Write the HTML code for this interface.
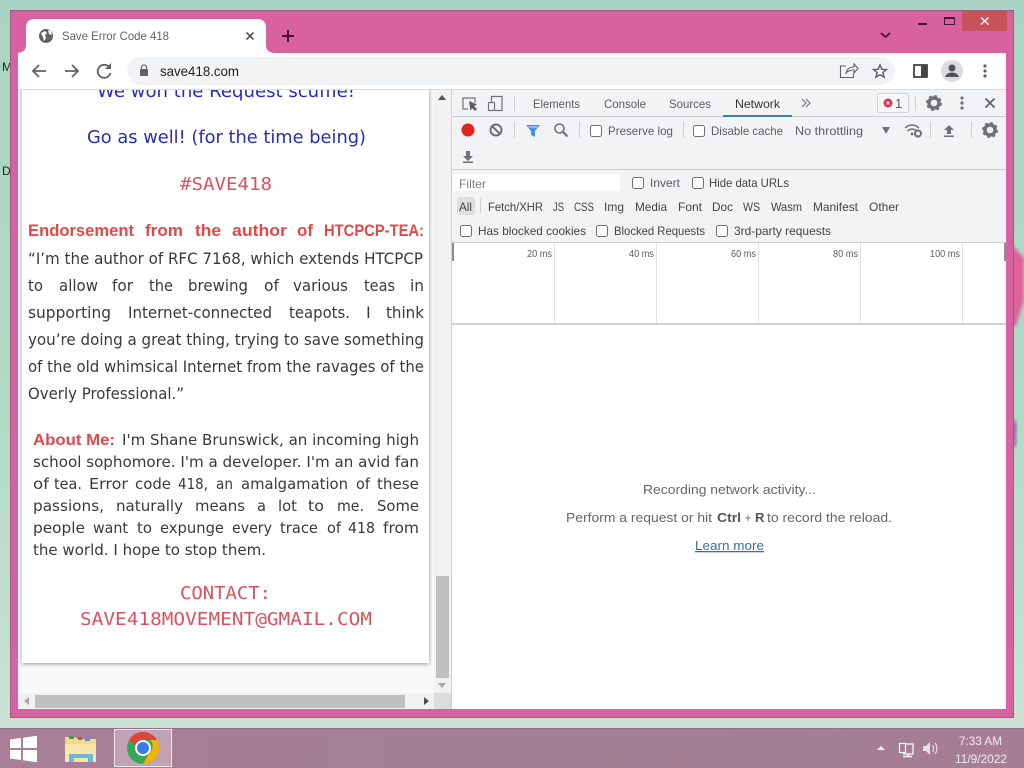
<!DOCTYPE html>
<html><head><meta charset="utf-8"><title>Save Error Code 418</title>
<style>
html,body{margin:0;padding:0;width:1024px;height:768px;overflow:hidden;background:#aad5c3}
svg{display:block;position:absolute;left:0;top:0}
text{font-family:"Liberation Sans",sans-serif;white-space:pre}
.d{font-size:12px;fill:#5a5d61}
.b{font-size:16px;fill:#3a3a3a}
.a{font-size:15.500px;fill:#3a3a3a}
.dj text,text.dj{font-family:"DejaVu Sans",sans-serif}
.m{font-family:"DejaVu Sans Mono",monospace;font-size:18px;fill:#d9525f}
.cb{fill:#fff;stroke:#6e7175;stroke-width:1}
</style></head><body>
<svg width="1024" height="768" viewBox="0 0 1024 768" xmlns="http://www.w3.org/2000/svg">
<defs>
<linearGradient id="wp" x1="0" y1="0" x2="0" y2="1"><stop offset="0" stop-color="#a9d3c4"/><stop offset="0.5" stop-color="#aedac4"/><stop offset="1" stop-color="#c9e2d4"/></linearGradient>
<linearGradient id="tb" x1="0" y1="0" x2="1" y2="0"><stop offset="0" stop-color="#a97e98"/><stop offset="0.5" stop-color="#a38096"/><stop offset="1" stop-color="#a67e93"/></linearGradient>
<filter id="sh" x="-5%" y="-5%" width="110%" height="110%"><feDropShadow dx="0" dy="1" stdDeviation="2" flood-color="#000" flood-opacity=".4"/></filter>
<filter id="bl"><feGaussianBlur stdDeviation="1.500"/></filter>
<clipPath id="pg"><rect x="18" y="90" width="416" height="605"/></clipPath>
</defs>
<!-- wallpaper -->
<rect width="1024" height="728" fill="url(#wp)"/>
<path d="M1012 245 L1024 258 V300 L1016 326 H1012Z" fill="#e0609a" filter="url(#bl)"/>
<path d="M1012 415 L1017 425 L1016 447 H1012Z" fill="#9a6fa8" filter="url(#bl)"/>
<text x="2" y="71" font-size="12" fill="#222">M</text>
<text x="2" y="175" font-size="12" fill="#222">D</text>
<!-- window -->
<rect x="10.500" y="10.500" width="1003" height="707" fill="#d8619f" stroke="#94607c"/>
<rect x="962" y="11" width="45" height="20" fill="#c9535a"/>
<path d="M981 17.500l7.500 7M988.500 17.500l-7.500 7" stroke="#fff" stroke-width="1.300"/>
<rect x="918" y="23" width="9" height="2" fill="#4a0f3a"/>
<rect x="944.500" y="17.500" width="10" height="7" fill="none" stroke="#4a0f3a" stroke-width="1"/><rect x="944" y="17" width="11" height="2" fill="#4a0f3a"/>
<path d="M881 33l4.500 4 4.500-4" fill="none" stroke="#4a0f3a" stroke-width="1.800"/>
<!-- tab -->
<path d="M18 53 C24 52 26 50 26 44 V28 Q26 19 35 19 H257 Q266 19 266 28 V44 C266 50 268 52 274 53Z" fill="#fff"/>
<circle cx="46" cy="36" r="7" fill="#5f6368"/>
<path d="M41 33l4 -2 2 2-2 2 1 3 -2 3-1-4zM48 30l3 1 1 4-3-1z" fill="#fff"/>
<text x="62" y="40" font-size="12" fill="#5f6368" textLength="107" lengthAdjust="spacingAndGlyphs">Save Error Code 418</text>
<path d="M246.500 32.500l7 7M253.500 32.500l-7 7" stroke="#444" stroke-width="1.500"/>
<path d="M288 30v12M282 36h12" stroke="#4a0f3a" stroke-width="2"/>
<!-- toolbar -->
<rect x="18" y="53" width="988" height="37" fill="#fff"/>
<rect x="18" y="89" width="988" height="1" fill="#dadce0"/>
<rect x="127" y="57" width="768" height="28" rx="14" fill="#f1f3f4"/>
<path d="M46 71H34M39 65l-6 6 6 6" fill="none" stroke="#5f6368" stroke-width="1.800"/>
<path d="M65 71H78M72 65l6 6-6 6" fill="none" stroke="#5f6368" stroke-width="1.800"/>
<path d="M109.500 67.500A6.500 6.500 0 1 0 110.500 73" fill="none" stroke="#5f6368" stroke-width="1.800"/>
<path d="M111 63v6h-6z" fill="#5f6368"/>
<rect x="140" y="69" width="8" height="7" rx="1" fill="#5f6368"/>
<path d="M141.500 69v-1.500a2.500 2.500 0 0 1 5 0V69" fill="none" stroke="#5f6368" stroke-width="1.200"/>
<text x="160" y="76" font-size="13.500" fill="#222" textLength="79" lengthAdjust="spacingAndGlyphs">save418.com</text>
<path d="M846 66h-5.500v11.500h13V73M846 73c1-4 4-6 8-6v-3l4 4.500-4 4.500v-3c-3 0-6 1-8 3z" fill="none" stroke="#5f6368" stroke-width="1.100"/>
<path d="M880 65l1.800 4.200 4.600.4-3.500 3 1.100 4.500-4-2.400-4 2.400 1.100-4.500-3.500-3 4.600-.4z" fill="none" stroke="#5f6368" stroke-width="1.500"/>
<rect x="914" y="65" width="13" height="12" fill="none" stroke="#444" stroke-width="1.800"/><rect x="921" y="65" width="6" height="12" fill="#444"/>
<circle cx="952" cy="71" r="11" fill="#dadce0"/>
<circle cx="952" cy="68" r="3.500" fill="#4f5358"/><path d="M945 77c1-3 4-4.500 7-4.500s6 1.500 7 4.500z" fill="#4f5358"/>
<circle cx="985" cy="66" r="1.600" fill="#5f6368"/><circle cx="985" cy="71" r="1.600" fill="#5f6368"/><circle cx="985" cy="76" r="1.600" fill="#5f6368"/>
<!-- page -->
<rect x="18" y="90" width="434" height="619" fill="#f9f9f9"/>
<rect x="22" y="85" width="407" height="578" fill="#fff" filter="url(#sh)" clip-path="url(#pg)"/>
<g clip-path="url(#pg)">
<text class="dj" x="97" y="97" font-size="18" fill="#2b2bb5" textLength="258" lengthAdjust="spacingAndGlyphs">We won the Request scuffle!</text>
</g>
<text class="dj" x="87" y="143" font-size="18" fill="#2b2bb5" textLength="279" lengthAdjust="spacingAndGlyphs">Go as well! (for the time being)</text>
<text class="m" x="180" y="190" textLength="92" lengthAdjust="spacingAndGlyphs">#SAVE418</text>
<g style="fill:#e2474a;font-weight:bold;font-size:16.500px">
<text x="28" y="236" textLength="106" lengthAdjust="spacingAndGlyphs">Endorsement</text>
<text x="145" y="236" textLength="38" lengthAdjust="spacingAndGlyphs">from</text>
<text x="195" y="236" textLength="26" lengthAdjust="spacingAndGlyphs">the</text>
<text x="232" y="236" textLength="55" lengthAdjust="spacingAndGlyphs">author</text>
<text x="297" y="236" textLength="16" lengthAdjust="spacingAndGlyphs">of</text>
<text x="324" y="236" textLength="100" lengthAdjust="spacingAndGlyphs">HTCPCP-TEA:</text>
</g>
<g class="b dj">
<text x="28" y="264" textLength="395" lengthAdjust="spacingAndGlyphs">“I’m the author of RFC 7168, which extends HTCPCP</text>
<text x="28" y="291" textLength="15" lengthAdjust="spacingAndGlyphs">to</text>
<text x="59" y="291" textLength="39" lengthAdjust="spacingAndGlyphs">allow</text>
<text x="112" y="291" textLength="21" lengthAdjust="spacingAndGlyphs">for</text>
<text x="149" y="291" textLength="24" lengthAdjust="spacingAndGlyphs">the</text>
<text x="188" y="291" textLength="60" lengthAdjust="spacingAndGlyphs">brewing</text>
<text x="264" y="291" textLength="15" lengthAdjust="spacingAndGlyphs">of</text>
<text x="293" y="291" textLength="55" lengthAdjust="spacingAndGlyphs">various</text>
<text x="364" y="291" textLength="31" lengthAdjust="spacingAndGlyphs">teas</text>
<text x="410" y="291" textLength="14" lengthAdjust="spacingAndGlyphs">in</text>
<text x="28" y="318" textLength="83" lengthAdjust="spacingAndGlyphs">supporting</text>
<text x="128" y="318" textLength="144" lengthAdjust="spacingAndGlyphs">Internet-connected</text>
<text x="289" y="318" textLength="61" lengthAdjust="spacingAndGlyphs">teapots.</text>
<text x="366" y="318">I</text>
<text x="386" y="318" textLength="38" lengthAdjust="spacingAndGlyphs">think</text>
<text x="28" y="345" textLength="396" lengthAdjust="spacingAndGlyphs">you’re doing a great thing, trying to save something</text>
<text x="28" y="372" textLength="396" lengthAdjust="spacingAndGlyphs">of the old whimsical Internet from the ravages of the</text>
<text x="28" y="399" textLength="156" lengthAdjust="spacingAndGlyphs">Overly Professional.”</text>
</g>
<text x="33" y="445" font-size="16" font-weight="bold" fill="#e2474a" textLength="82" lengthAdjust="spacingAndGlyphs">About Me:</text>
<g class="a dj">
<text x="122" y="445" textLength="297" lengthAdjust="spacingAndGlyphs">I'm Shane Brunswick, an incoming high</text>
<text x="33" y="467" textLength="386" lengthAdjust="spacingAndGlyphs">school sophomore. I'm a developer. I'm an avid fan</text>
<text x="33" y="489" textLength="16" lengthAdjust="spacingAndGlyphs">of</text>
<text x="54" y="489" textLength="28" lengthAdjust="spacingAndGlyphs">tea.</text>
<text x="89" y="489" textLength="39" lengthAdjust="spacingAndGlyphs">Error</text>
<text x="135" y="489" textLength="36" lengthAdjust="spacingAndGlyphs">code</text>
<text x="178" y="489" textLength="30" lengthAdjust="spacingAndGlyphs">418,</text>
<text x="216" y="489" textLength="17" lengthAdjust="spacingAndGlyphs">an</text>
<text x="241" y="489" textLength="107" lengthAdjust="spacingAndGlyphs">amalgamation</text>
<text x="356" y="489" textLength="14" lengthAdjust="spacingAndGlyphs">of</text>
<text x="377" y="489" textLength="42" lengthAdjust="spacingAndGlyphs">these</text>
<text x="33" y="511" textLength="71" lengthAdjust="spacingAndGlyphs">passions,</text>
<text x="116" y="511" textLength="67" lengthAdjust="spacingAndGlyphs">naturally</text>
<text x="195" y="511" textLength="50" lengthAdjust="spacingAndGlyphs">means</text>
<text x="257" y="511" textLength="9" lengthAdjust="spacingAndGlyphs">a</text>
<text x="278" y="511" textLength="19" lengthAdjust="spacingAndGlyphs">lot</text>
<text x="308" y="511" textLength="16" lengthAdjust="spacingAndGlyphs">to</text>
<text x="337" y="511" textLength="27" lengthAdjust="spacingAndGlyphs">me.</text>
<text x="377" y="511" textLength="42" lengthAdjust="spacingAndGlyphs">Some</text>
<text x="33" y="533" textLength="52" lengthAdjust="spacingAndGlyphs">people</text>
<text x="93" y="533" textLength="35" lengthAdjust="spacingAndGlyphs">want</text>
<text x="137" y="533" textLength="15" lengthAdjust="spacingAndGlyphs">to</text>
<text x="160" y="533" textLength="64" lengthAdjust="spacingAndGlyphs">expunge</text>
<text x="232" y="533" textLength="40" lengthAdjust="spacingAndGlyphs">every</text>
<text x="280" y="533" textLength="38" lengthAdjust="spacingAndGlyphs">trace</text>
<text x="327" y="533" textLength="14" lengthAdjust="spacingAndGlyphs">of</text>
<text x="348" y="533" textLength="27" lengthAdjust="spacingAndGlyphs">418</text>
<text x="383" y="533" textLength="36" lengthAdjust="spacingAndGlyphs">from</text>
<text x="33" y="555" textLength="233" lengthAdjust="spacingAndGlyphs">the world. I hope to stop them.</text>
</g>
<text class="m" x="180" y="599" textLength="91" lengthAdjust="spacingAndGlyphs">CONTACT:</text>
<text class="m" x="80" y="625" textLength="292" lengthAdjust="spacingAndGlyphs">SAVE418MOVEMENT@GMAIL.COM</text>
<!-- scrollbars -->
<rect x="434" y="90" width="17" height="619" fill="#f1f1f1"/>
<rect x="451" y="90" width="1" height="619" fill="#cfd1d3"/>
<rect x="436" y="576" width="13" height="102" fill="#c0c0c0"/>
<path d="M442 95l4 5h-8z" fill="#505050"/>
<path d="M442 688l-4-5h8z" fill="#a8a8a8"/>
<rect x="18" y="693" width="416" height="15" fill="#f1f1f1"/>
<rect x="434" y="693" width="17" height="16" fill="#dcdcdc"/>
<rect x="35" y="695" width="370" height="13" fill="#c0c0c0"/>
<path d="M24 701l5-4v8z" fill="#a8a8a8"/>
<path d="M429 701l-5-4v8z" fill="#505050"/>
<!-- devtools -->
<rect x="452" y="90" width="554" height="153" fill="#f1f3f4"/>
<rect x="452" y="116" width="554" height="1" fill="#cbcdd1"/>
<rect x="452" y="169" width="554" height="1" fill="#cbcdd1"/>
<rect x="452" y="242" width="554" height="1" fill="#cbcdd1"/>
<rect x="452" y="243" width="554" height="466" fill="#fff"/>
<!-- devtools top icons -->
<path d="M468 109h-5V98h12v5" fill="none" stroke="#6e7175" stroke-width="1.200"/>
<path d="M469 101l8 3.500-3 1.500 3 3-2 2-3-3-1.500 3z" fill="#5a5d61"/>
<rect x="488.500" y="102.500" width="6" height="8" rx="1" fill="none" stroke="#6e7175" stroke-width="1.200"/>
<path d="M491.500 102V96.500H502V110.500H495" fill="none" stroke="#6e7175" stroke-width="1.200"/>
<rect x="514" y="96" width="1" height="15" fill="#cbcdd1"/>
<g class="d">
<text x="533" y="108" textLength="47" lengthAdjust="spacingAndGlyphs">Elements</text>
<text x="604" y="108" textLength="42" lengthAdjust="spacingAndGlyphs">Console</text>
<text x="669" y="108" textLength="42" lengthAdjust="spacingAndGlyphs">Sources</text>
<text x="735" y="108" textLength="45" lengthAdjust="spacingAndGlyphs" style="fill:#333">Network</text>
</g>
<rect x="723" y="115" width="69" height="2" fill="#3f7cb0"/>
<path d="M802 99l4 4-4 4M806 99l4 4-4 4" fill="none" stroke="#6e7175" stroke-width="1.100"/>
<rect x="877.500" y="93.500" width="31" height="19" rx="2" fill="#f5f6f7" stroke="#d0d2d5"/>
<circle cx="888" cy="103" r="4.500" fill="#d93352"/>
<path d="M886.500 101.500l3 3M889.500 101.500l-3 3" stroke="#fff" stroke-width=".9"/>
<text x="895" y="108" font-size="13" fill="#5a5d61">1</text>
<rect x="915" y="96" width="1" height="15" fill="#cbcdd1"/>
<circle cx="934" cy="103" r="5" fill="none" stroke="#6e7175" stroke-width="3.400"/><circle cx="934" cy="103" r="7" fill="none" stroke="#6e7175" stroke-width="2" stroke-dasharray="2.800 2.700"/>
<circle cx="962" cy="98" r="1.600" fill="#6e7175"/><circle cx="962" cy="103" r="1.600" fill="#6e7175"/><circle cx="962" cy="108" r="1.600" fill="#6e7175"/>
<path d="M985.500 98.500l9 9M994.500 98.500l-9 9" stroke="#5f6368" stroke-width="1.800"/>
<!-- row 2 -->
<circle cx="468" cy="130" r="6.500" fill="#e0261c"/>
<circle cx="496" cy="130" r="5.500" fill="none" stroke="#6e7175" stroke-width="2"/>
<path d="M492 126l8 8" stroke="#6e7175" stroke-width="2"/>
<rect x="514" y="122" width="1" height="16" fill="#cbcdd1"/>
<path d="M526 125h14l-5 6v6l-4-2v-4z" fill="#4a8fe0"/><path d="M528.500 127h9" stroke="#cfe2f8" stroke-width="1"/>
<circle cx="559.500" cy="128.500" r="4.500" fill="none" stroke="#6e7175" stroke-width="1.600"/>
<path d="M563 132l4.500 4.500" stroke="#6e7175" stroke-width="2"/>
<rect x="579" y="122" width="1" height="16" fill="#cbcdd1"/>
<rect class="cb" x="590.500" y="125.500" width="11" height="11" rx="2"/>
<text class="d" x="608" y="135" textLength="65" lengthAdjust="spacingAndGlyphs">Preserve log</text>
<rect x="683" y="122" width="1" height="16" fill="#cbcdd1"/>
<rect class="cb" x="693.500" y="125.500" width="11" height="11" rx="2"/>
<text class="d" x="711" y="135" textLength="72" lengthAdjust="spacingAndGlyphs">Disable cache</text>
<text class="d" x="795" y="135" textLength="68" lengthAdjust="spacingAndGlyphs">No throttling</text>
<path d="M882 127h8l-4 7z" fill="#6e7175"/>
<path d="M905 128c4-4 10-4 14 0M907.500 131c2.500-2.500 6.500-2.500 9 0" fill="none" stroke="#6e7175" stroke-width="1.500"/>
<circle cx="912" cy="134" r="1.400" fill="#6e7175"/>
<circle cx="918" cy="133.500" r="3" fill="none" stroke="#6e7175" stroke-width="2"/>
<rect x="930" y="122" width="1" height="16" fill="#cbcdd1"/>
<path d="M949 125l5 5h-3v4h-4v-4h-3z" fill="#6e7175"/><rect x="944" y="135.500" width="10" height="1.500" fill="#6e7175"/>
<rect x="971" y="122" width="1" height="16" fill="#cbcdd1"/>
<circle cx="990" cy="130" r="5" fill="none" stroke="#6e7175" stroke-width="3.400"/><circle cx="990" cy="130" r="7" fill="none" stroke="#6e7175" stroke-width="2" stroke-dasharray="2.800 2.700"/>
<path d="M468 161l-5-5h3v-5h4v5h3z" fill="#6e7175"/><rect x="463" y="161.500" width="10" height="1.500" fill="#6e7175"/>
<!-- filter row -->
<rect x="453" y="174" width="167" height="17" fill="#fff"/>
<text x="459" y="188" font-size="12" fill="#7b7e82" textLength="27" lengthAdjust="spacingAndGlyphs">Filter</text>
<rect class="cb" x="632.500" y="177.500" width="11" height="11" rx="2"/>
<text class="d" x="650" y="187" textLength="30" lengthAdjust="spacingAndGlyphs">Invert</text>
<rect class="cb" x="692.500" y="177.500" width="11" height="11" rx="2"/>
<text class="d" x="709" y="187" textLength="80" lengthAdjust="spacingAndGlyphs" style="fill:#444">Hide data URLs</text>
<rect x="457" y="197" width="18" height="18" rx="4" fill="#dcdee0"/>
<rect x="480" y="199" width="1" height="14" fill="#cbcdd1"/>
<g class="d" style="fill:#444">
<text x="459" y="211" textLength="13" lengthAdjust="spacingAndGlyphs">All</text>
<text x="488" y="211" textLength="55" lengthAdjust="spacingAndGlyphs">Fetch/XHR</text>
<text x="553" y="211" textLength="11" lengthAdjust="spacingAndGlyphs">JS</text>
<text x="574" y="211" textLength="20" lengthAdjust="spacingAndGlyphs">CSS</text>
<text x="604" y="211" textLength="20" lengthAdjust="spacingAndGlyphs">Img</text>
<text x="635" y="211" textLength="32" lengthAdjust="spacingAndGlyphs">Media</text>
<text x="678" y="211" textLength="24" lengthAdjust="spacingAndGlyphs">Font</text>
<text x="712" y="211" textLength="21" lengthAdjust="spacingAndGlyphs">Doc</text>
<text x="743" y="211" textLength="17" lengthAdjust="spacingAndGlyphs">WS</text>
<text x="771" y="211" textLength="31" lengthAdjust="spacingAndGlyphs">Wasm</text>
<text x="813" y="211" textLength="45" lengthAdjust="spacingAndGlyphs">Manifest</text>
<text x="869" y="211" textLength="30" lengthAdjust="spacingAndGlyphs">Other</text>
</g>
<rect class="cb" x="460.500" y="225.500" width="11" height="11" rx="2"/>
<rect class="cb" x="596.500" y="225.500" width="11" height="11" rx="2"/>
<rect class="cb" x="716.500" y="225.500" width="11" height="11" rx="2"/>
<g class="d" style="fill:#444">
<text x="478" y="235" textLength="108" lengthAdjust="spacingAndGlyphs">Has blocked cookies</text>
<text x="614" y="235" textLength="91" lengthAdjust="spacingAndGlyphs">Blocked Requests</text>
<text x="734" y="235" textLength="97" lengthAdjust="spacingAndGlyphs">3rd-party requests</text>
</g>
<!-- timeline -->
<g fill="#dfe1e3">
<rect x="554" y="243" width="1" height="80"/><rect x="656" y="243" width="1" height="80"/><rect x="758" y="243" width="1" height="80"/><rect x="860" y="243" width="1" height="80"/><rect x="962" y="243" width="1" height="80"/>
</g>
<rect x="452" y="243" width="2" height="18" fill="#8a8c90"/>
<rect x="1004" y="243" width="2" height="18" fill="#8a8c90"/>
<g font-size="10" fill="#5a5d61">
<text x="527" y="257" textLength="25" lengthAdjust="spacingAndGlyphs">20 ms</text>
<text x="629" y="257" textLength="25" lengthAdjust="spacingAndGlyphs">40 ms</text>
<text x="731" y="257" textLength="25" lengthAdjust="spacingAndGlyphs">60 ms</text>
<text x="833" y="257" textLength="25" lengthAdjust="spacingAndGlyphs">80 ms</text>
<text x="930" y="257" textLength="30" lengthAdjust="spacingAndGlyphs">100 ms</text>
</g>
<rect x="452" y="323" width="554" height="2" fill="#cfd1d3"/>
<!-- center message -->
<g font-size="13" fill="#666">
<text x="643" y="494" textLength="173" lengthAdjust="spacingAndGlyphs">Recording network activity...</text>
<text x="566" y="522" textLength="146" lengthAdjust="spacingAndGlyphs">Perform a request or hit</text>
<text x="717" y="522" font-weight="bold" fill="#555" textLength="24" lengthAdjust="spacingAndGlyphs">Ctrl</text>
<text x="745" y="522" textLength="6" lengthAdjust="spacingAndGlyphs">+</text>
<text x="755" y="522" font-weight="bold" fill="#555">R</text>
<text x="767" y="522" textLength="125" lengthAdjust="spacingAndGlyphs">to record the reload.</text>
<text x="695" y="550" fill="#3a6f9e" text-decoration="underline" textLength="69" lengthAdjust="spacingAndGlyphs">Learn more</text>
</g>
<!-- taskbar -->
<rect y="728" width="1024" height="40" fill="url(#tb)"/>
<rect y="728" width="1024" height="1" fill="#8f7285"/>
<path d="M10 739.500l11-1.500v10H10zM23 737.700l14-2V748H23zM10 750h11v10l-11-1.500zM23 750h14v12.300l-14-2z" fill="#fff"/>
<rect x="114.500" y="729.500" width="57" height="37" fill="#bfa3b4" stroke="#efe6ec"/>
<path d="M65 737h10l3 2h18v22H66z" fill="#f3d98a"/>
<rect x="65" y="744" width="31" height="18" fill="#f8e6a8"/>
<path d="M69 762v-8h24v8h-5v-4H74v4z" fill="#6fb6dc"/>
<rect x="69" y="736" width="5" height="3" fill="#4e9a3e"/><rect x="78" y="737" width="4" height="3" fill="#c9503a"/><rect x="85" y="738" width="5" height="3" fill="#5d8fd0"/>
<circle cx="143" cy="748" r="16" fill="#34a853"/>
<path d="M143 732a16 16 0 0 1 13.900 8H143a8 8 0 0 0-7.500 5.200L129.100 740A16 16 0 0 1 143 732z" fill="#db4437"/>
<path d="M156.900 740A16 16 0 0 1 143 764l7-12a8 8 0 0 0 0-12z" fill="#f4b400"/>
<circle cx="143" cy="748" r="8" fill="#fff"/>
<circle cx="143" cy="748" r="6" fill="#3b78e7"/>
<path d="M881 746l4 4h-8z" fill="#f4eef2"/>
<rect x="899.500" y="743.500" width="6" height="9" fill="none" stroke="#fff" stroke-width="1.200"/>
<path d="M906 744h7v10h-10" fill="none" stroke="#fff" stroke-width="1.200"/>
<path d="M908 754v2M903 756.500h9" stroke="#fff" stroke-width="1.400"/>
<path d="M923 746h3l4-4v13l-4-4h-3z" fill="#e8dfe6"/>
<path d="M932.500 745c1.500 2 1.500 5 0 7M935 743c2.500 3 2.500 8 0 11" fill="none" stroke="#f0e8ee" stroke-width="1"/>
<text x="959" y="745" font-size="12" fill="#f1ebef" textLength="43" lengthAdjust="spacingAndGlyphs">7:33 AM</text>
<text x="955" y="763" font-size="12" fill="#f1ebef" textLength="52" lengthAdjust="spacingAndGlyphs">11/9/2022</text>
</svg>
</body></html>
